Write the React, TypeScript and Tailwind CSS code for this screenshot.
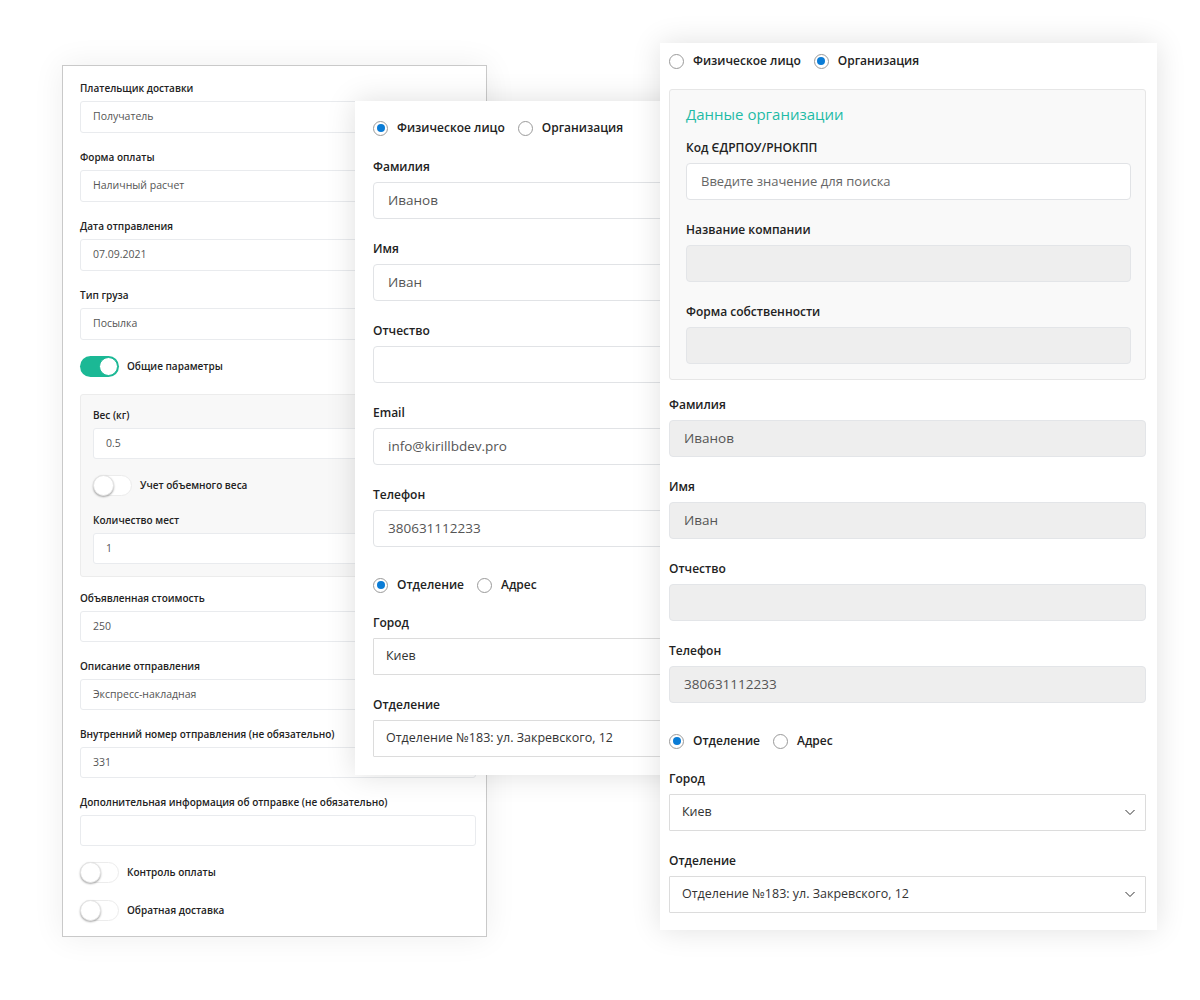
import React from "react";

const font = { fontFamily: '"Open Sans", "Noto Sans", sans-serif' };

function Toggle({ on, label }: { on?: boolean; label: string }) {
  return (
    <div className="flex h-[21px] items-center gap-2">
      {on ? (
        <div className="relative h-[21px] w-[39px] rounded-full bg-[#1bb895]">
          <div className="absolute right-[1px] top-[1px] h-[19px] w-[19px] rounded-full border border-[#1bb895] bg-white" />
        </div>
      ) : (
        <div className="relative h-[21px] w-[39px] rounded-full border border-[#ececec] bg-white">
          <div className="absolute left-[-1px] top-[-1px] h-[21px] w-[21px] rounded-full border border-[#e4e4e4] bg-white shadow-[0_1px_2px_rgba(0,0,0,0.35)]" />
        </div>
      )}
      <span className="text-[10px] font-semibold text-[#222]">{label}</span>
    </div>
  );
}

function SmallField({ label, value, last, tall }: { label: string; value?: string; last?: boolean; tall?: boolean }) {
  return (
    <div className={last ? "" : "mb-[16px]"}>
      <div className="mb-[5px] h-[16px] text-[10px] font-semibold leading-[16px] text-[#222]">{label}</div>
      <div
        className={
          tall
            ? "flex h-[32px] items-center rounded-[3px] border border-[#e9ebee] bg-white pl-[12px] text-[10.5px] text-[#555]"
            : "flex h-[31px] items-center rounded-[3px] border border-[#e9ebee] bg-white pl-[12px] text-[10.5px] text-[#555]"
        }
      >
        {value}
      </div>
    </div>
  );
}

function Radio({ checked, label }: { checked?: boolean; label: string }) {
  return (
    <div className="flex items-center gap-[9px]">
      <div className="flex h-[15px] w-[15px] items-center justify-center rounded-full border border-[#9a9a9a] bg-white">
        {checked && <div className="h-[8px] w-[8px] rounded-full bg-[#0a7cd6]" />}
      </div>
      <span className="text-[12px] font-semibold text-[#222]">{label}</span>
    </div>
  );
}

function BigField({
  label,
  value,
  disabled,
  select,
  placeholder,
  mb = true,
}: {
  label: string;
  value?: string;
  disabled?: boolean;
  select?: boolean;
  placeholder?: string;
  mb?: boolean;
}) {
  let box = "flex h-[37px] items-center justify-between rounded-[4px] border border-[#e1e3e6] bg-white pl-[14px] pr-[12px] text-[13.5px] text-[#555]";
  if (disabled) box = "flex h-[37px] items-center justify-between rounded-[4px] border border-[#e3e5e8] bg-[#eeeeee] pl-[14px] pr-[12px] text-[13.5px] text-[#555]";
  if (select) box = "flex h-[37px] items-center justify-between rounded-[1px] border border-[#dcdcdc] bg-white pl-[12px] pr-[9px] text-[12.5px] text-[#333]";
  return (
    <div className={mb ? "mb-[20px]" : ""}>
      <div className="mb-[5px] h-[20px] text-[12px] font-semibold leading-[20px] text-[#222]">{label}</div>
      <div className={box}>
        <span className={placeholder ? "text-[13px] text-[#666]" : ""}>{placeholder ?? value}</span>
        {select && (
          <svg width="12" height="7" viewBox="0 0 12 7" className="shrink-0">
            <polyline points="1.5,1 6,5.5 10.5,1" fill="none" stroke="#333" strokeWidth="1" />
          </svg>
        )}
      </div>
    </div>
  );
}

function LeftPanel() {
  return (
    <div className="absolute left-[62px] top-[65px] h-[872px] w-[425px] border border-[#c9c9c9] bg-white pl-[17px] pr-[10px] pt-[14px] shadow-[0_0_30px_rgba(0,0,0,0.07)]">
      <SmallField label="Плательщик доставки" value="Получатель" tall />
      <SmallField label="Форма оплаты" value="Наличный расчет" tall />
      <SmallField label="Дата отправления" value="07.09.2021" tall />
      <SmallField label="Тип груза" value="Посылка" tall />
      <Toggle on label="Общие параметры" />
      <div className="mt-[17px] rounded-[3px] border border-[#ececec] bg-[#f8f8f8] px-[12px] pb-[12px] pt-[12px]">
        <SmallField label="Вес (кг)" value="0.5" />
        <div className="mb-[16px] mt-[1px]">
          <Toggle label="Учет объемного веса" />
        </div>
        <SmallField label="Количество мест" value="1" last />
      </div>
      <div className="mt-[13px]">
        <SmallField label="Объявленная стоимость" value="250" />
        <SmallField label="Описание отправления" value="Экспресс-накладная" />
        <SmallField label="Внутренний номер отправления (не обязательно)" value="331" />
        <SmallField label="Дополнительная информация об отправке (не обязательно)" value="" />
      </div>
      <div className="mt-[3px] flex flex-col gap-[17px]">
        <Toggle label="Контроль оплаты" />
        <Toggle label="Обратная доставка" />
      </div>
    </div>
  );
}

function MiddlePanel() {
  return (
    <div className="absolute left-[355px] top-[101px] h-[674px] w-[340px] bg-white pl-[18px] pr-[10px] pt-[18px] shadow-[0_0_28px_rgba(0,0,0,0.13)]">
      <div className="mb-[20px] flex h-[18px] items-center gap-[13px]">
        <Radio checked label="Физическое лицо" />
        <Radio label="Организация" />
      </div>
      <BigField label="Фамилия" value="Иванов" />
      <BigField label="Имя" value="Иван" />
      <BigField label="Отчество" value="" />
      <BigField label="Email" value="info@kirillbdev.pro" />
      <BigField label="Телефон" value="380631112233" mb={false} />
      <div className="mb-[19px] mt-[29px] flex h-[18px] items-center gap-[13px]">
        <Radio checked label="Отделение" />
        <Radio label="Адрес" />
      </div>
      <BigField label="Город" value="Киев" select />
      <BigField label="Отделение" value="Отделение №183: ул. Закревского, 12" select mb={false} />
    </div>
  );
}

function RightPanel() {
  return (
    <div className="absolute left-[660px] top-[43px] h-[887px] w-[497px] bg-white pl-[9px] pr-[11px] pt-[9px] shadow-[0_0_28px_rgba(0,0,0,0.12)]">
      <div className="mb-[19px] flex h-[18px] items-center gap-[13px]">
        <Radio label="Физическое лицо" />
        <Radio checked label="Организация" />
      </div>
      <div className="rounded-[3px] border border-[#e6e6e6] bg-[#f9f9f9] pb-[15px] pl-[16px] pr-[14px] pt-[13px]">
        <div className="mb-[13px] h-[22px] text-[15px] leading-[22px] text-[#1fbba6]">Данные организации</div>
        <BigField label="Код ЄДРПОУ/РНОКПП" placeholder="Введите значение для поиска" />
        <BigField label="Название компании" disabled />
        <BigField label="Форма собственности" disabled mb={false} />
      </div>
      <div className="mt-[15px]">
        <BigField label="Фамилия" value="Иванов" disabled />
        <BigField label="Имя" value="Иван" disabled />
        <BigField label="Отчество" disabled />
        <BigField label="Телефон" value="380631112233" disabled mb={false} />
      </div>
      <div className="mb-[19px] mt-[29px] flex h-[18px] items-center gap-[13px]">
        <Radio checked label="Отделение" />
        <Radio label="Адрес" />
      </div>
      <BigField label="Город" value="Киев" select />
      <BigField label="Отделение" value="Отделение №183: ул. Закревского, 12" select mb={false} />
    </div>
  );
}

export default function App() {
  return (
    <div className="relative h-[1000px] w-[1200px] overflow-hidden bg-white" style={font}>
      <LeftPanel />
      <MiddlePanel />
      <RightPanel />
    </div>
  );
}
